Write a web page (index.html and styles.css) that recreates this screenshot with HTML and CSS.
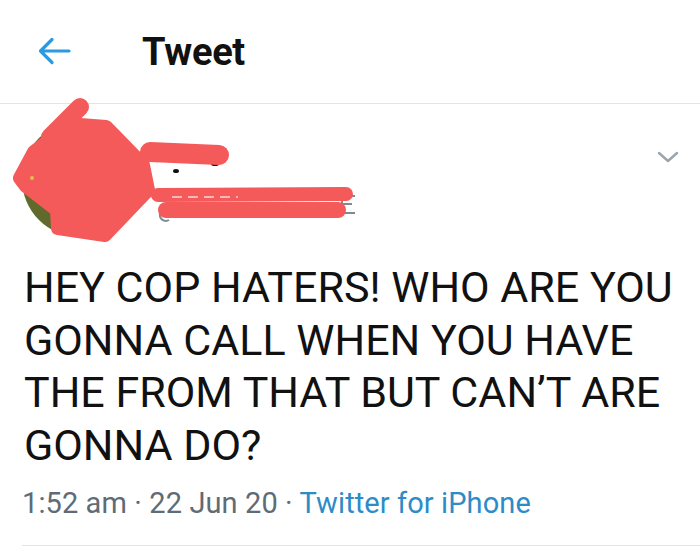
FILE: index.html
```html
<!DOCTYPE html>
<html lang="en">
<head>
<meta charset="utf-8">
<title>Tweet</title>
<link rel="stylesheet" href="styles.css">
</head>
<body>
<header class="topbar">
  <svg class="back" width="34" height="30" viewBox="0 0 34 30" aria-hidden="true">
    <path d="M32 15H4M15 3.5L3.5 15L15 26.5" fill="none" stroke="#2b9ae0" stroke-width="3.2" stroke-linecap="round" stroke-linejoin="round"/>
  </svg>
  <h1 class="title">Tweet</h1>
</header>
<article class="tweet">
  <div class="author">
    <div class="avatar"></div>
    <svg class="redact" width="380" height="170" viewBox="0 0 380 170" aria-hidden="true">
      <ellipse cx="176" cy="81" rx="3" ry="2" fill="#111"/>
      <ellipse cx="215" cy="74" rx="4" ry="2" fill="#111"/>
      <path d="M343 106H355M342 106V123M342 114H352M342 123H355" fill="none" stroke="#7f8a93" stroke-width="2"/>
      <path d="M167 119a6 6 0 1 0 2 11" fill="none" stroke="#7f8a93" stroke-width="2"/>
      <g fill="none" stroke="#f45a59" stroke-linecap="round" stroke-linejoin="round">
        <path d="M80 17L50 47" stroke-width="18"/>
        <path d="M60 42L80 35L106 37L143 75L148 100L105 145L58 138L57 120L26 96L20 88L34 62Z" fill="#f45a59" stroke-width="14"/>
        <path d="M150 62L219 65" stroke-width="20"/>
        <path d="M158 105L346 104" stroke-width="14"/>
        <path d="M166 120L338 120" stroke-width="16"/>
      </g>
      <circle cx="32" cy="88" r="2" fill="#d9c24a"/>
      <path d="M172 107H238" fill="none" stroke="#f7d6d6" stroke-width="1.5" stroke-dasharray="10 6"/>
    </svg>
    <svg class="chev" width="24" height="14" viewBox="0 0 24 14" aria-hidden="true">
      <path d="M3 3L12 11L21 3" fill="none" stroke="#9aa4ad" stroke-width="2.4" stroke-linecap="round" stroke-linejoin="round"/>
    </svg>
  </div>
  <p class="text">HEY COP HATERS! WHO ARE YOU<br>GONNA CALL WHEN YOU HAVE<br>THE FROM THAT BUT CAN’T ARE<br>GONNA DO?</p>
  <div class="meta"><span>1:52 am</span> · <span>22 Jun 20</span> · <span class="source">Twitter for iPhone</span></div>
</article>
</body>
</html>
```
FILE: styles.css
```css
html, body {
  margin: 0;
  padding: 0;
  background: #ffffff;
}
body {
  font-family: Roboto, "Noto Sans", "Liberation Sans", sans-serif;
  color: #141414;
  width: 700px;
  overflow: hidden;
}
.topbar {
  height: 104px;
  box-sizing: border-box;
  border-bottom: 1px solid #e2e4e6;
  display: flex;
  align-items: center;
  padding-left: 37px;
}
.back {
  display: block;
  margin-top: -2px;
}
.title {
  margin: 0 0 0 71px;
  font-size: 38px;
  font-weight: 700;
  color: #111;
  letter-spacing: -0.3px;
}
.tweet {
  padding: 0 0 0 22px;
}
.author {
  position: relative;
  display: flex;
  align-items: flex-start;
  height: 157px;
}
.avatar {
  width: 116px;
  height: 116px;
  border-radius: 50%;
  background: #5f6a2c;
  margin: 17px 0 0 0;
}
.redact {
  position: absolute;
  left: -22px;
  top: -14px;
}
.chev {
  position: absolute;
  right: 20px;
  top: 46px;
}
.text {
  margin: 0;
  padding-left: 2px;
  font-size: 43px;
  line-height: 52.5px;
  color: #111;
  white-space: nowrap;
}
.meta {
  margin: 14px 0 0 0;
  font-size: 29px;
  line-height: 36px;
  color: #5f6b75;
  letter-spacing: 0.1px;
  padding-bottom: 24px;
  border-bottom: 1px solid #e2e4e6;
}
.source {
  color: #2c8cc7;
}
```
